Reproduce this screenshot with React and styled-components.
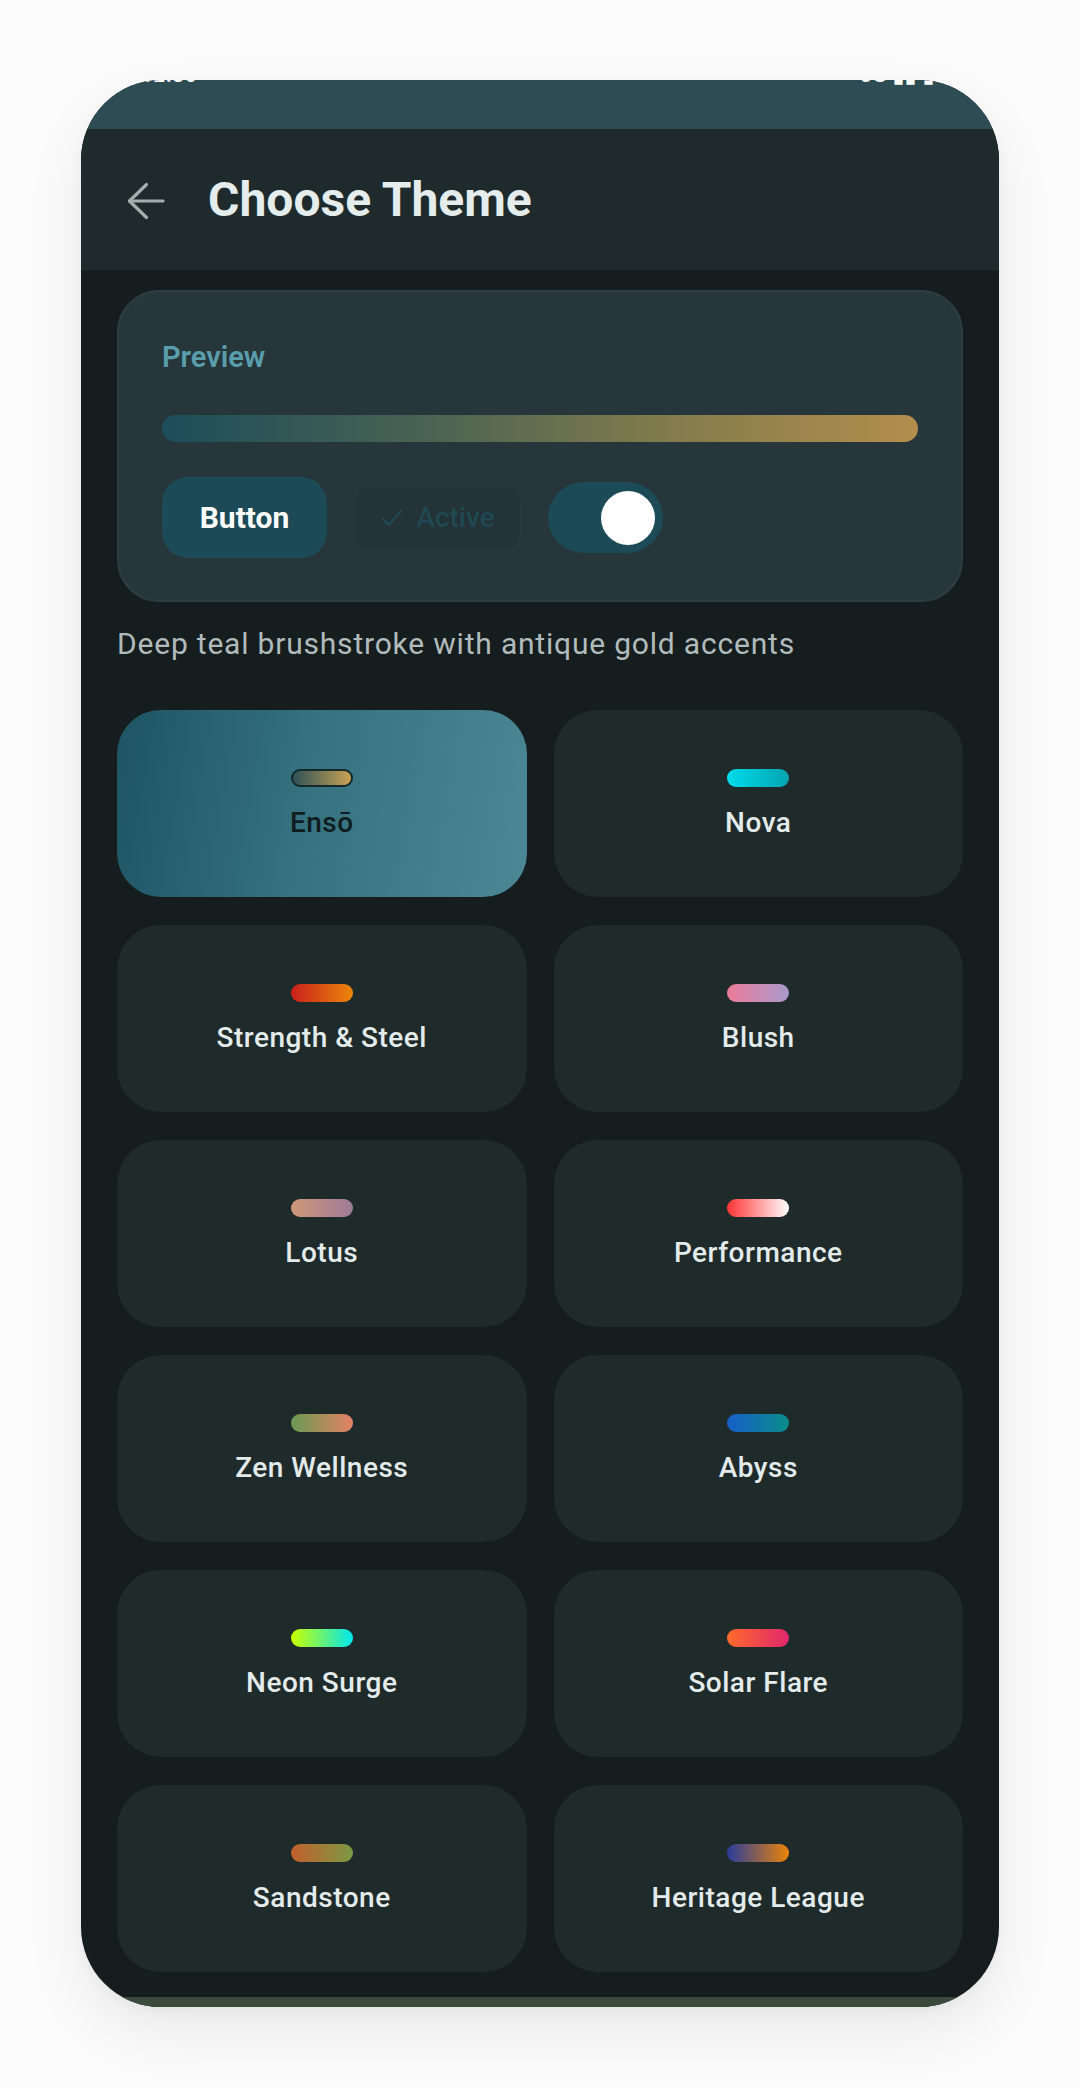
import React from "react";
import styled, { createGlobalStyle } from "styled-components";

const Global = createGlobalStyle`
  html, body { margin: 0; padding: 0; background: #fbfbfb; }
  body { font-family: Roboto, "Noto Sans", "Liberation Sans", sans-serif; }
  * { box-sizing: border-box; }
`;

const Page = styled.div`
  width: 1080px;
  height: 2088px;
  display: flex;
  justify-content: center;
  padding-top: 80px;
  background: #fbfbfb;
`;

const Phone = styled.div`
  width: 918px;
  height: 1927px;
  border-radius: 80px;
  overflow: hidden;
  display: flex;
  flex-direction: column;
  background: #151d1f;
  box-shadow: 0 26px 60px rgba(0, 0, 0, 0.07), 0 4px 14px rgba(0, 0, 0, 0.04);
`;

const StatusBar = styled.div`
  height: 49px;
  flex: none;
  background: #2e4c54;
  display: flex;
  justify-content: space-between;
  align-items: flex-start;
  padding: 0 64px 0 60px;
  overflow: hidden;
`;

const StatusText = styled.span`
  margin-top: -15px;
  font-size: 20px;
  line-height: 20px;
  font-weight: 700;
  color: #ffffff;
  letter-spacing: 1px;
  white-space: nowrap;
`;

const Header = styled.header`
  height: 141px;
  flex: none;
  background: #1e2a2c;
  display: flex;
  align-items: center;
  gap: 43px;
  padding-left: 46px;
`;

const BackIcon = styled.svg`
  width: 38px;
  height: 38px;
  flex: none;
  margin-top: 2px;
`;

const Title = styled.h1`
  margin: 0;
  font-size: 48px;
  font-weight: 700;
  color: #e4ecec;
  letter-spacing: 0px;
`;

const Body = styled.main`
  flex: 1;
  overflow: hidden;
  padding: 20px 36px 0 36px;
  display: flex;
  flex-direction: column;
`;

const PreviewCard = styled.section`
  height: 312px;
  border-radius: 42px;
  background: #26363a;
  border: 2px solid #2d3e42;
  padding: 48px 43px 0 43px;
  display: flex;
  flex-direction: column;
`;

const PreviewLabel = styled.div`
  font-size: 29px;
  line-height: 34px;
  font-weight: 600;
  color: #5a9dac;
`;

const GradientBar = styled.div`
  margin-top: 41px;
  height: 27px;
  border-radius: 14px;
  background: linear-gradient(90deg, #1c4d5a 0%, #4a6352 35%, #7f7a4c 65%, #b38e4d 100%);
`;

const ControlRow = styled.div`
  margin-top: 35px;
  display: flex;
  align-items: center;
  gap: 27px;
`;

const PrimaryButton = styled.button`
  height: 81px;
  width: 165px;
  border: none;
  border-radius: 26px;
  background: #1c4b57;
  color: #ffffff;
  font-family: inherit;
  font-size: 30px;
  font-weight: 700;
`;

const Chip = styled.div`
  height: 65px;
  width: 167px;
  border-radius: 16px;
  background: #233337;
  border: 1px solid #28393d;
  display: flex;
  align-items: center;
  justify-content: center;
  gap: 12px;
  color: #1f4852;
  font-size: 28px;
  font-weight: 500;
`;

const Toggle = styled.div`
  width: 115px;
  height: 71px;
  border-radius: 36px;
  background: #1c4b57;
  display: flex;
  align-items: center;
  justify-content: flex-end;
  padding-right: 8px;
`;

const Thumb = styled.div`
  width: 54px;
  height: 54px;
  border-radius: 50%;
  background: #ffffff;
`;

const Description = styled.p`
  margin: 25px 0 0 0;
  font-size: 30px;
  line-height: 34px;
  letter-spacing: 0.8px;
  color: #b2bbbc;
  font-weight: 400;
`;

const Grid = styled.div`
  margin-top: 49px;
  display: grid;
  grid-template-columns: 1fr 1fr;
  grid-auto-rows: 187px;
  gap: 28px 27px;
`;

const ThemeCard = styled.div`
  border-radius: 44px;
  background: ${(p) =>
    p.$selected
      ? "linear-gradient(100deg, #1e5464 0%, #35717f 45%, #4b8795 100%)"
      : "#1f2a2a"};
  display: flex;
  flex-direction: column;
  align-items: center;
  justify-content: center;
  gap: 20px;
`;

const Swatch = styled.div`
  width: 62px;
  height: 18px;
  border-radius: 9px;
  background: ${(p) => p.$bg};
  border: ${(p) => (p.$selected ? "2.5px solid #14282c" : "none")};
`;

const ThemeName = styled.div`
  font-size: 28px;
  line-height: 32px;
  font-weight: 500;
  letter-spacing: 0.5px;
  color: ${(p) => (p.$selected ? "#0f1d20" : "#e3ebeb")};
`;

const BottomStrip = styled.div`
  height: 10px;
  flex: none;
  background: #3b4a3b;
`;

const themes = [
  { name: "Ensō", grad: "linear-gradient(90deg, #2f5256, #c9a255)", selected: true },
  { name: "Nova", grad: "linear-gradient(90deg, #00dcec, #03a4ae)" },
  { name: "Strength & Steel", grad: "linear-gradient(90deg, #c8201c, #ec860a)" },
  { name: "Blush", grad: "linear-gradient(90deg, #ec7c98, #a899cc)" },
  { name: "Lotus", grad: "linear-gradient(90deg, #cf9878, #9e7a98)" },
  { name: "Performance", grad: "linear-gradient(90deg, #ff3434, #ffffff)" },
  { name: "Zen Wellness", grad: "linear-gradient(90deg, #6a9a52, #e48266)" },
  { name: "Abyss", grad: "linear-gradient(90deg, #175ec8, #0a8d8a)" },
  { name: "Neon Surge", grad: "linear-gradient(90deg, #ccff00, #00e6ee)" },
  { name: "Solar Flare", grad: "linear-gradient(90deg, #ff6a2c, #e0266c)" },
  { name: "Sandstone", grad: "linear-gradient(90deg, #c35f2c, #7c9a44)" },
  { name: "Heritage League", grad: "linear-gradient(90deg, #283c9c, #ec8408)" },
];

export default function App() {
  return (
    <>
      <Global />
      <Page>
        <Phone>
          <StatusBar>
            <StatusText>12:30</StatusText>
            <StatusText>5G ▮▮ ▮</StatusText>
          </StatusBar>
          <Header>
            <BackIcon viewBox="0 0 38 38" fill="none" stroke="#a3aeae" strokeWidth="3.2" strokeLinecap="round" strokeLinejoin="round">
              <path d="M36 19H2.5" />
              <path d="M19.5 2.5L2.5 19L19.5 35.5" />
            </BackIcon>
            <Title>Choose Theme</Title>
          </Header>
          <Body>
            <PreviewCard>
              <PreviewLabel>Preview</PreviewLabel>
              <GradientBar />
              <ControlRow>
                <PrimaryButton>Button</PrimaryButton>
                <Chip>
                  <svg width="24" height="24" viewBox="0 0 24 24" fill="none" stroke="#1f4852" strokeWidth="2.5" strokeLinecap="round" strokeLinejoin="round">
                    <path d="M3 13l6 6L21 5" />
                  </svg>
                  Active
                </Chip>
                <Toggle>
                  <Thumb />
                </Toggle>
              </ControlRow>
            </PreviewCard>
            <Description>Deep teal brushstroke with antique gold accents</Description>
            <Grid>
              {themes.map((t) => (
                <ThemeCard key={t.name} $selected={t.selected}>
                  <Swatch $bg={t.grad} $selected={t.selected} />
                  <ThemeName $selected={t.selected}>{t.name}</ThemeName>
                </ThemeCard>
              ))}
            </Grid>
          </Body>
          <BottomStrip />
        </Phone>
      </Page>
    </>
  );
}
